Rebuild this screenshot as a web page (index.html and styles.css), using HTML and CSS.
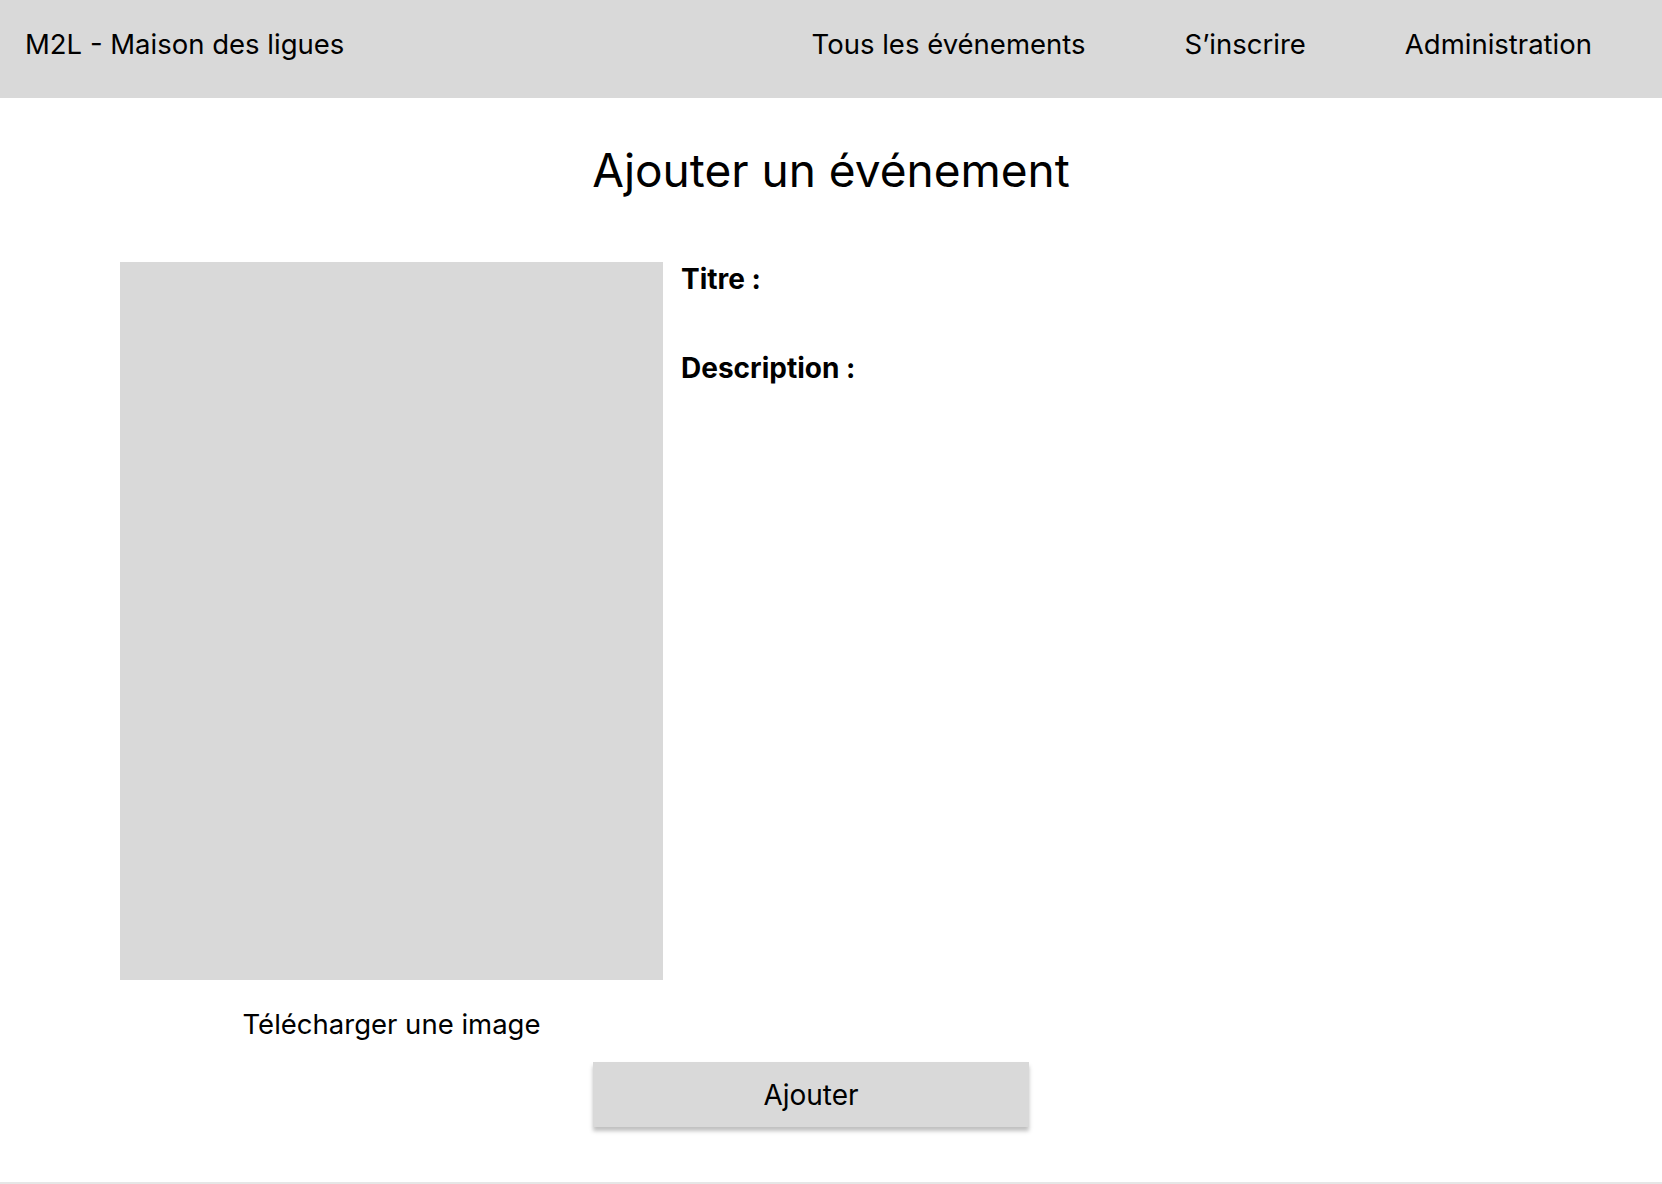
FILE: index.html
```html
<!DOCTYPE html>
<html lang="fr">
<head>
<meta charset="utf-8">
<title>Ajouter un événement - M2L</title>
<link rel="stylesheet" href="styles.css">
</head>
<body>
<header class="topbar">
  <div class="brand">M2L - Maison des ligues</div>
  <nav class="nav">
    <a class="nav-link" href="#">Tous les événements</a>
    <a class="nav-link" href="#">S’inscrire</a>
    <a class="nav-link" href="#">Administration</a>
  </nav>
</header>
<main class="page">
  <h1 class="title">Ajouter un événement</h1>
  <form class="event-form">
    <div class="form-grid">
      <div class="image-col">
        <div class="image-drop"></div>
        <div class="upload-label">Télécharger une image</div>
      </div>
      <div class="fields">
        <div class="field-label">Titre :</div>
        <div class="field-label">Description :</div>
      </div>
    </div>
    <button class="submit" type="button">Ajouter</button>
  </form>
</main>
<div class="bottom-line"></div>
</body>
</html>
```

FILE: styles.css
```css
* { box-sizing: border-box; }
html, body {
  margin: 0;
  padding: 0;
  background: #ffffff;
  color: #000000;
  font-family: Inter, "Noto Sans", "Liberation Sans", sans-serif;
}
.topbar {
  height: 98px;
  background: #d9d9d9;
  display: flex;
  align-items: flex-start;
  padding: 27px 70px 0 25px;
  font-size: 27.5px;
  line-height: 34px;
}
.brand { white-space: nowrap; }
.nav {
  margin-left: auto;
  display: flex;
  gap: 99px;
}
.nav-link {
  color: #000000;
  text-decoration: none;
  white-space: nowrap;
}
.page {
  display: flex;
  flex-direction: column;
}
.title {
  margin: 44px 0 0 0;
  font-size: 46px;
  line-height: 56px;
  font-weight: 400;
  text-align: center;
}
.event-form {
  margin-top: 64px;
  display: flex;
  flex-direction: column;
  align-items: flex-start;
}
.form-grid {
  display: flex;
  gap: 18px;
  padding-left: 120px;
}
.image-col {
  display: flex;
  flex-direction: column;
  align-items: center;
  width: 543px;
}
.image-drop {
  width: 543px;
  height: 718px;
  background: #d9d9d9;
}
.upload-label {
  margin-top: 27px;
  font-size: 27.5px;
  line-height: 34px;
  white-space: nowrap;
}
.fields {
  display: flex;
  flex-direction: column;
  gap: 55px;
}
.field-label {
  font-size: 28px;
  line-height: 34px;
  font-weight: 700;
  white-space: nowrap;
}
.submit {
  margin: 21px 0 0 593px;
  width: 436px;
  height: 65px;
  border: none;
  background: #d9d9d9;
  box-shadow: 0 4px 4px rgba(0, 0, 0, 0.25);
  font-family: inherit;
  font-size: 28px;
  color: #000000;
  padding: 0;
}
.bottom-line {
  margin-top: 55px;
  height: 2px;
  background: #e6e6e6;
}
```
